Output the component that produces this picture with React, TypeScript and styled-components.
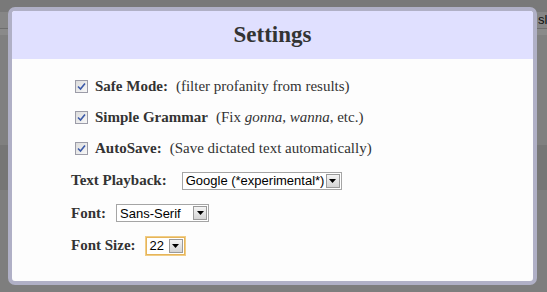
import React, { FC } from "react";
import styled, { createGlobalStyle } from "styled-components";

const GlobalStyle = createGlobalStyle`
  html, body {
    margin: 0;
    padding: 0;
    background: #7c7c7c;
  }
  body {
    font-family: "Liberation Serif", "Times New Roman", serif;
    width: 547px;
    height: 292px;
    overflow: hidden;
  }
`;

const Page = styled.div`
  position: relative;
  width: 547px;
  height: 292px;
  display: flex;
  flex-direction: column;
`;

const TopBar = styled.div`
  height: 12px;
  background: #797979;
`;

const SearchRow = styled.div`
  height: 16px;
  display: flex;
  justify-content: flex-end;
  background: #868686;
  border-bottom: 1px solid #6e6e6e;
`;

const SearchBox = styled.div`
  width: 9px;
  overflow: hidden;
  font-family: "Liberation Sans", Arial, sans-serif;
  font-size: 13px;
  line-height: 16px;
  color: #111;
  white-space: nowrap;
`;

interface BandProps {
  $h: number;
  $c: string;
}

const Band = styled.div<BandProps>`
  height: ${(p) => p.$h}px;
  background: ${(p) => p.$c};
`;

const Dialog = styled.div`
  position: absolute;
  left: 8px;
  top: 7px;
  width: 521px;
  height: 270px;
  border: 4px solid #b0b0c6;
  border-radius: 7px;
  background: #fdfdfd;
  overflow: hidden;
  display: flex;
  flex-direction: column;
`;

const Header = styled.div`
  height: 48px;
  background: #e0e0ff;
  display: flex;
  align-items: center;
  justify-content: center;
`;

const Title = styled.h2`
  margin: 0;
  font-size: 23px;
  font-weight: bold;
  color: #333;
`;

const Body = styled.div`
  display: flex;
  flex-direction: column;
  padding: 12px 0 0 59px;
`;

interface RowProps {
  $h: number;
}

const Row = styled.div<RowProps>`
  height: ${(p) => p.$h}px;
  display: flex;
  align-items: center;
  font-size: 15px;
  color: #333;
  white-space: nowrap;
`;

const CheckRow = styled(Row)`
  padding-left: 4px;
`;

const Box = styled.span`
  width: 11px;
  height: 11px;
  border: 1px solid #9c9ca8;
  background: linear-gradient(135deg, #dcdcdc, #f8f8f8);
  display: flex;
  align-items: center;
  justify-content: center;
  margin-right: 7px;
`;

const Label = styled.b`
  font-weight: bold;
  margin-right: 8px;
`;

const Note = styled.span`
  font-weight: normal;
`;

interface SelectProps {
  $w: number;
  $focus?: boolean;
}

const Select = styled.div<SelectProps>`
  width: ${(p) => p.$w}px;
  height: 16px;
  display: flex;
  align-items: center;
  justify-content: space-between;
  border: 1px solid ${(p) => (p.$focus ? "#e6b55a" : "#a5a5a5")};
  box-shadow: ${(p) => (p.$focus ? "0 0 0 1px #f1cd86" : "none")};
  background: #fff;
  font-family: "Liberation Sans", Arial, sans-serif;
  font-size: 13px;
  color: #000;
  padding-left: 3px;
`;

const Arrow = styled.span`
  width: 14px;
  height: 14px;
  margin-right: 1px;
  border: 1px solid #9a9a9a;
  box-sizing: border-box;
  background: linear-gradient(#f4f4f4, #d4d4d4);
  display: flex;
  align-items: center;
  justify-content: center;
`;

interface FieldLabelProps {
  $gap: number;
}

const FieldLabel = styled.b<FieldLabelProps>`
  font-weight: bold;
  margin-right: ${(p) => p.$gap}px;
`;

const Check: FC = () => (
  <Box>
    <svg width="9" height="9" viewBox="0 0 9 9">
      <path d="M1 4.5 L3.5 7 L8 1.5" fill="none" stroke="#3c5aa8" strokeWidth="1.6" />
    </svg>
  </Box>
);

interface DropProps {
  value: string;
  width: number;
  focus?: boolean;
}

const Drop: FC<DropProps> = ({ value, width, focus }) => (
  <Select $w={width} $focus={focus}>
    <span>{value}</span>
    <Arrow>
      <svg width="7" height="4" viewBox="0 0 7 4">
        <path d="M0 0 H7 L3.5 4 Z" fill="#000" />
      </svg>
    </Arrow>
  </Select>
);

const App: FC = () => (
  <>
    <GlobalStyle />
    <Page>
      <TopBar />
      <SearchRow>
        <SearchBox>sl</SearchBox>
      </SearchRow>
      <Band $h={6} $c="#8a8a8a" />
      <Band $h={110} $c="#808080" />
      <Band $h={45} $c="#767676" />
      <Band $h={102} $c="#7e7e7e" />
      <Dialog>
        <Header>
          <Title>Settings</Title>
        </Header>
        <Body>
          <CheckRow $h={31}>
            <Check />
            <Label>Safe Mode:</Label>
            <Note>(filter profanity from results)</Note>
          </CheckRow>
          <CheckRow $h={30}>
            <Check />
            <Label>Simple Grammar</Label>
            <Note>
              (Fix <i>gonna</i>, <i>wanna</i>, etc.)
            </Note>
          </CheckRow>
          <CheckRow $h={32}>
            <Check />
            <Label>AutoSave:</Label>
            <Note>(Save dictated text automatically)</Note>
          </CheckRow>
          <Row $h={33}>
            <FieldLabel $gap={15}>Text Playback:</FieldLabel>
            <Drop value="Google (*experimental*)" width={155} />
          </Row>
          <Row $h={32}>
            <FieldLabel $gap={10}>Font:</FieldLabel>
            <Drop value="Sans-Serif" width={88} />
          </Row>
          <Row $h={33}>
            <FieldLabel $gap={10}>Font Size:</FieldLabel>
            <Drop value="22" width={34} focus />
          </Row>
        </Body>
      </Dialog>
    </Page>
  </>
);

export default App;
